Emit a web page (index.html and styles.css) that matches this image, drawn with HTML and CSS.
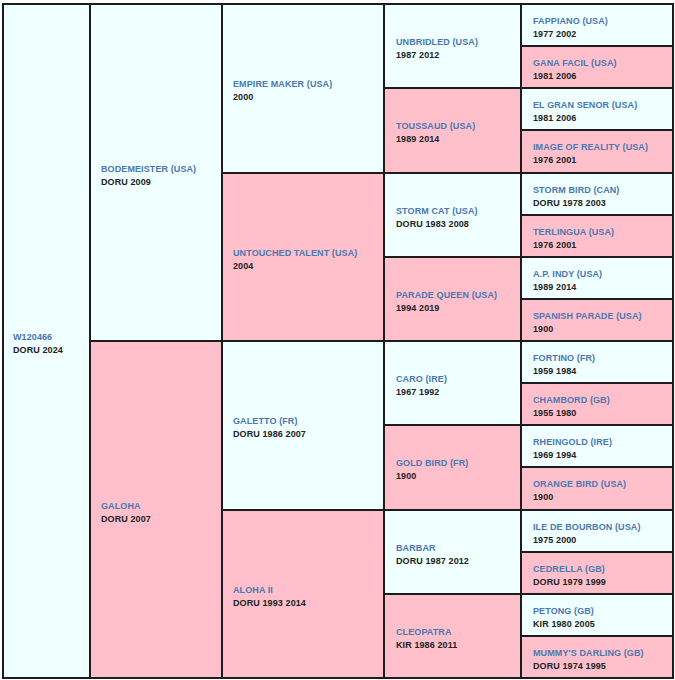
FILE: index.html
```html
<!DOCTYPE html>
<html>
<head>
<meta charset="utf-8">
<link rel="stylesheet" href="styles.css">
</head>
<body>
<div class="ped">
  <div class="cell c1 s16 m"><span class="n">W120466</span><span class="d">DORU 2024</span></div>
  <div class="cell c2 s8 m"><span class="n">BODEMEISTER (USA)</span><span class="d">DORU 2009</span></div>
  <div class="cell c3 s4 m"><span class="n">EMPIRE MAKER (USA)</span><span class="d">2000</span></div>
  <div class="cell c4 s2 m"><span class="n">UNBRIDLED (USA)</span><span class="d">1987 2012</span></div>
  <div class="cell c5 s1 m"><span class="n">FAPPIANO (USA)</span><span class="d">1977 2002</span></div>
  <div class="cell c5 s1 f"><span class="n">GANA FACIL (USA)</span><span class="d">1981 2006</span></div>
  <div class="cell c4 s2 f"><span class="n">TOUSSAUD (USA)</span><span class="d">1989 2014</span></div>
  <div class="cell c5 s1 m"><span class="n">EL GRAN SENOR (USA)</span><span class="d">1981 2006</span></div>
  <div class="cell c5 s1 f"><span class="n">IMAGE OF REALITY (USA)</span><span class="d">1976 2001</span></div>
  <div class="cell c3 s4 f"><span class="n">UNTOUCHED TALENT (USA)</span><span class="d">2004</span></div>
  <div class="cell c4 s2 m"><span class="n">STORM CAT (USA)</span><span class="d">DORU 1983 2008</span></div>
  <div class="cell c5 s1 m"><span class="n">STORM BIRD (CAN)</span><span class="d">DORU 1978 2003</span></div>
  <div class="cell c5 s1 f"><span class="n">TERLINGUA (USA)</span><span class="d">1976 2001</span></div>
  <div class="cell c4 s2 f"><span class="n">PARADE QUEEN (USA)</span><span class="d">1994 2019</span></div>
  <div class="cell c5 s1 m"><span class="n">A.P. INDY (USA)</span><span class="d">1989 2014</span></div>
  <div class="cell c5 s1 f"><span class="n">SPANISH PARADE (USA)</span><span class="d">1900</span></div>
  <div class="cell c2 s8 f"><span class="n">GALOHA</span><span class="d">DORU 2007</span></div>
  <div class="cell c3 s4 m"><span class="n">GALETTO (FR)</span><span class="d">DORU 1986 2007</span></div>
  <div class="cell c4 s2 m"><span class="n">CARO (IRE)</span><span class="d">1967 1992</span></div>
  <div class="cell c5 s1 m"><span class="n">FORTINO (FR)</span><span class="d">1959 1984</span></div>
  <div class="cell c5 s1 f"><span class="n">CHAMBORD (GB)</span><span class="d">1955 1980</span></div>
  <div class="cell c4 s2 f"><span class="n">GOLD BIRD (FR)</span><span class="d">1900</span></div>
  <div class="cell c5 s1 m"><span class="n">RHEINGOLD (IRE)</span><span class="d">1969 1994</span></div>
  <div class="cell c5 s1 f"><span class="n">ORANGE BIRD (USA)</span><span class="d">1900</span></div>
  <div class="cell c3 s4 f"><span class="n">ALOHA II</span><span class="d">DORU 1993 2014</span></div>
  <div class="cell c4 s2 m"><span class="n">BARBAR</span><span class="d">DORU 1987 2012</span></div>
  <div class="cell c5 s1 m"><span class="n">ILE DE BOURBON (USA)</span><span class="d">1975 2000</span></div>
  <div class="cell c5 s1 f"><span class="n">CEDRELLA (GB)</span><span class="d">DORU 1979 1999</span></div>
  <div class="cell c4 s2 f"><span class="n">CLEOPATRA</span><span class="d">KIR 1986 2011</span></div>
  <div class="cell c5 s1 m"><span class="n">PETONG (GB)</span><span class="d">KIR 1980 2005</span></div>
  <div class="cell c5 s1 f"><span class="n">MUMMY'S DARLING (GB)</span><span class="d">DORU 1974 1995</span></div>
</div>
</body>
</html>
```
FILE: styles.css
```css
html, body {
  margin: 0;
  padding: 0;
  background: #ffffff;
}
body {
  font-family: "Liberation Sans", Arial, sans-serif;
}
.ped {
  margin: 3px 0 0 2px;
  width: 672px;
  height: 676px;
  box-sizing: border-box;
  padding: 2px;
  background: #1c1c1c;
  display: grid;
  grid-template-columns: 85px 130px 160px 135px 150px;
  grid-template-rows: repeat(16, 1fr);
  gap: 2px;
}
.cell {
  display: flex;
  flex-direction: column;
  justify-content: center;
  padding: 6px 0 0 10px;
  font-size: 9px;
  font-weight: bold;
  line-height: 13px;
  min-height: 0;
  overflow: hidden;
  letter-spacing: 0.1px;
}
.c1 { grid-column: 1; padding-left: 9px; }
.c2 { grid-column: 2; }
.c3 { grid-column: 3; }
.c4 { grid-column: 4; padding-left: 11px; }
.c5 { grid-column: 5; padding-left: 11px; }
.s16 { grid-row: span 16; }
.s8 { grid-row: span 8; }
.s4 { grid-row: span 4; }
.s2 { grid-row: span 2; }
.s1 { grid-row: span 1; }
.m { background: #f0ffff; }
.f { background: #ffc0cb; }
.n { color: #4a78b0; }
.d { color: #222222; }
```
